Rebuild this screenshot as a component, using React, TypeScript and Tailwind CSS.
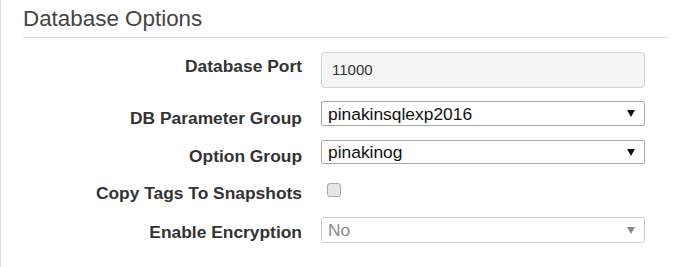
import React from "react";

function Arrow({ color }: { color: string }) {
  return (
    <svg width="8" height="7" viewBox="0 0 8 7" className="shrink-0">
      <path d="M0 0 H8 L4 7 Z" fill={color} />
    </svg>
  );
}

function Select({ value, disabled, h }: { value: string; disabled?: boolean; h: string }) {
  return (
    <div
      className={
        (disabled
          ? "border-[#cfcfcf] text-[#8a8a8a] "
          : "border-[#a9a9a9] text-[#111] ") +
        h +
        " flex w-[324px] items-center justify-between rounded-[2px] border bg-white pl-[6px] pr-[9px] text-[17.4px] leading-[20px]"
      }
    >
      <span>{value}</span>
      <Arrow color={disabled ? "#8a8a8a" : "#111"} />
    </div>
  );
}

const label = "w-[301px] text-right text-[17.4px] leading-[20px] font-bold text-[#333]";

export default function App() {
  return (
    <div
      className="h-[267px] w-[694px] border-l border-[#dedede] bg-white"
      style={{ fontFamily: '"Liberation Sans", Arial, sans-serif' }}
    >
      <div className="ml-[22px] mr-[26px] border-b border-[#dcdcdc] pt-[6px] pb-[5px]">
        <h2 className="text-[22.4px] leading-[26px] font-normal text-[#444]">Database Options</h2>
      </div>

      <div className="mt-[14px] flex flex-col">
        <div className="flex items-start gap-[19px]">
          <div className={label + " pt-[4px]"}>Database Port</div>
          <div className="flex h-[36px] w-[324px] items-center rounded-[4px] border border-[#d4d4d4] bg-[#f5f5f5] pl-[10px] text-[15px] text-[#333]">
            11000
          </div>
        </div>

        <div className="mt-[13px] flex items-start gap-[19px]">
          <div className={label + " pt-[7px]"}>DB Parameter Group</div>
          <Select value="pinakinsqlexp2016" h="h-[25px]" />
        </div>

        <div className="mt-[12px] flex items-start gap-[19px]">
          <div className={label + " pt-[6px]"}>Option Group</div>
          <Select value="pinakinog" h="h-[24px]" />
        </div>

        <div className="mt-[17px] flex items-start gap-[19px]">
          <div className={label}>Copy Tags To Snapshots</div>
          <div className="ml-[6px] h-[14px] w-[14px] rounded-[3px] border border-[#a8a8a8] bg-[#e6e6e6]" />
        </div>

        <div className="mt-[14px] flex items-start gap-[19px]">
          <div className={label + " pt-[5px]"}>Enable Encryption</div>
          <Select value="No" disabled h="h-[26px]" />
        </div>
      </div>
    </div>
  );
}
